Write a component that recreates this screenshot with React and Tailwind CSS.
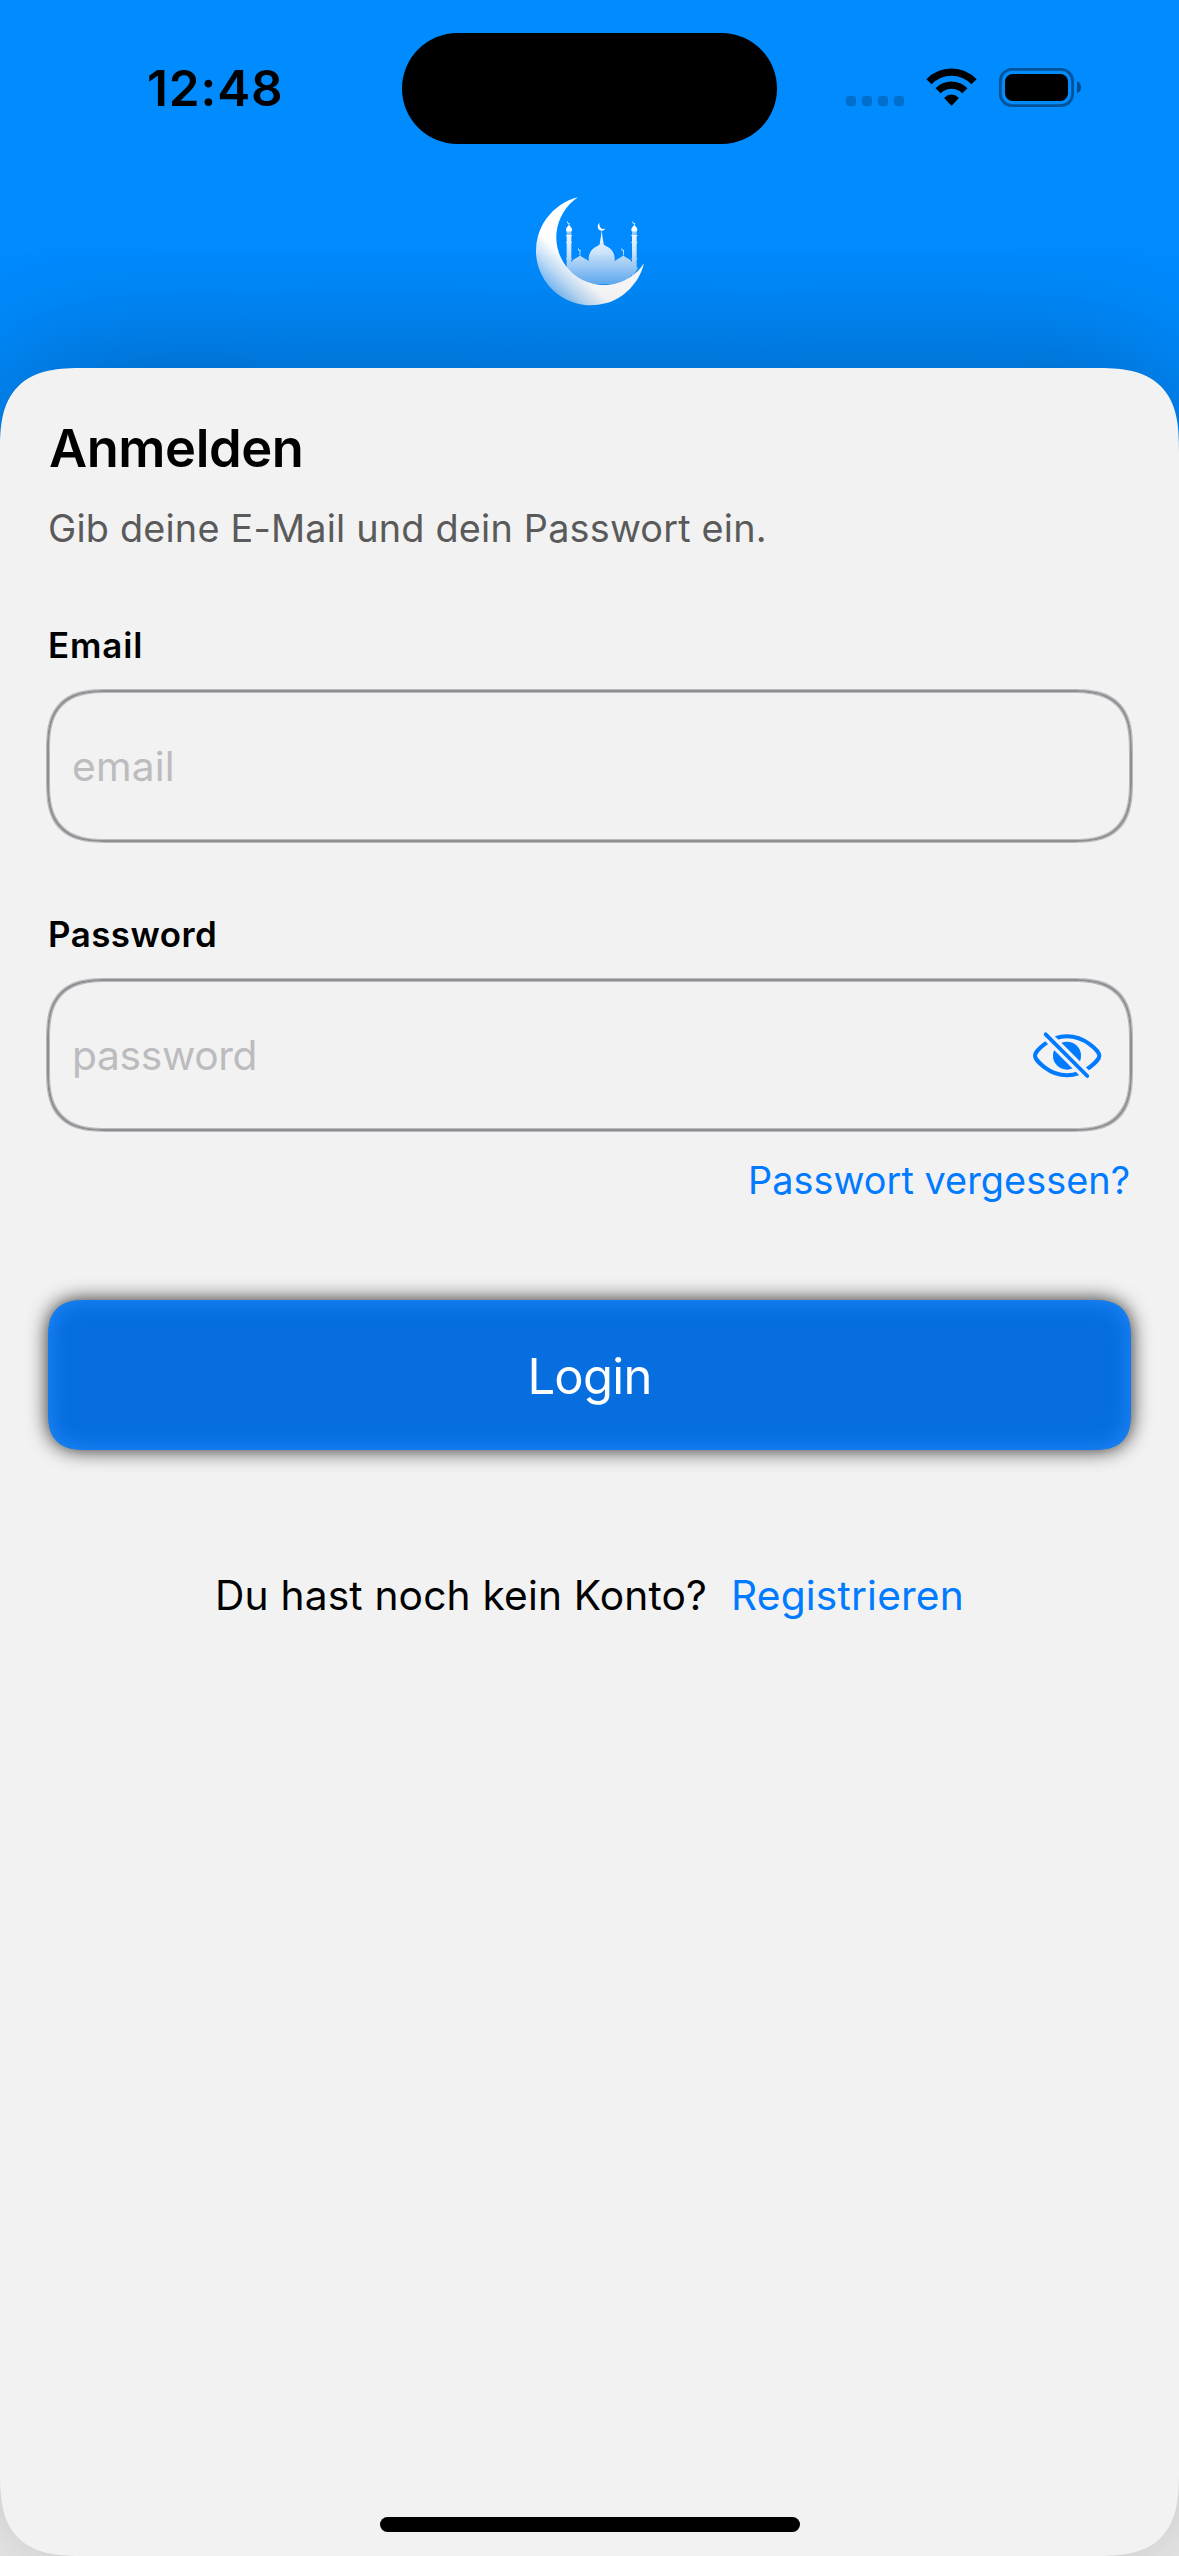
import React from "react";

function StatusIcons() {
  return (
    <svg className="ml-[69px] shrink-0" width="236" height="41" viewBox="846 68 236 41" fill="none">
      <g fill="#000" fillOpacity="0.2">
        <rect x="846" y="96" width="10" height="10" rx="3.2" />
        <rect x="862" y="96" width="10" height="10" rx="3.2" />
        <rect x="878" y="96" width="10" height="10" rx="3.2" />
        <rect x="894" y="96" width="10" height="10" rx="3.2" />
      </g>
      <g stroke="#000" strokeWidth="7.2">
        <path d="M929 81.8A31 31 0 0 1 974 81.8" />
        <path d="M938.1 90.8A18.8 18.8 0 0 1 964.9 90.8" />
      </g>
      <path
        d="M944.6 97.4A9.8 9.8 0 0 1 958.4 97.4Q959 98 958.4 98.6L952.1 105.3Q951.5 105.9 950.9 105.3L944.6 98.6Q944 98 944.6 97.4Z"
        fill="#000"
      />
      <rect x="1000.4" y="69.4" width="72.2" height="36.2" rx="11.6" stroke="#000" strokeOpacity="0.4" strokeWidth="2.8" />
      <rect x="1005" y="74" width="63" height="27" rx="7.8" fill="#000" />
      <path d="M1077 81.2C1079.6 82.2 1081 84.5 1081 87.3S1079.6 92.3 1077 93.3Z" fill="#000" fillOpacity="0.45" />
    </svg>
  );
}

function Finial({ x, y }) {
  return (
    <g transform={`translate(${x} ${y})`}>
      <path d="M-3 -7A5 5 0 1 0 4 -1A4.4 4.4 0 0 1 -3 -7Z" />
      <rect x="-1" y="1" width="2" height="14" />
    </g>
  );
}

function Minaret({ x }) {
  return (
    <g>
      <Finial x={x} y={128} />
      <path d={`M${x} 134L${x + 5} 139Q${x + 12} 146 ${x + 7} 154H${x - 7}Q${x - 12} 146 ${x - 5} 139Z`} />
      <rect x={x - 7} y="154" width="14" height="10" fillOpacity="0.6" />
      <rect x={x - 9} y="164" width="18" height="3" />
      <rect x={x - 7} y="167" width="14" height="140" />
      <rect x={x - 9} y="185" width="18" height="3" />
      <rect x={x - 9} y="234" width="18" height="3" />
    </g>
  );
}

function Logo() {
  return (
    <svg width="110" height="112" viewBox="75 44 330 336">
      <defs>
        <linearGradient id="moon" gradientUnits="userSpaceOnUse" x1="120" y1="332" x2="192" y2="260">
          <stop offset="0" stopColor="#6fb8fa" />
          <stop offset="0.5" stopColor="#c3e0fb" />
          <stop offset="1" stopColor="#fff" />
        </linearGradient>
        <linearGradient id="mosque" gradientUnits="userSpaceOnUse" x1="0" y1="140" x2="0" y2="312">
          <stop offset="0" stopColor="#fff" />
          <stop offset="0.45" stopColor="#cce5fd" />
          <stop offset="1" stopColor="#62aff8" />
        </linearGradient>
        <clipPath id="bowl">
          <path d="M100 100H384V264L340 330H100Z" />
        </clipPath>
      </defs>
      <g fill="url(#mosque)" clipPath="url(#bowl)">
        <Minaret x={177} />
        <Minaret x={373} />
        <path d="M184 246Q187 239 197 234Q207 230 210 225Q213 230 223 234Q232 238 236 243V232Q238 211 256 200Q270 195 275 181Q280 195 294 200Q312 211 314 232V243Q318 238 327 234Q337 230 340 225Q343 230 353 234Q363 239 366 246L384 264L340 312H220L170 260Z" />
        <Finial x={210} y={209} />
        <Finial x={340} y={209} />
        <path d="M275 148L277 166L281 190H269L273 166Z" />
        <path d="M269 127C262 132 261 143 268 149C275 154 284 151 286 144C281 148 275 146 272 142C268 137 267 132 269 127Z" fill="#fff" />
      </g>
      <path d="M204 51A164.3 164.3 0 1 0 402 249A143.1 143.1 0 1 1 204 51Z" fill="url(#moon)" />
    </svg>
  );
}

function EyeSlash() {
  return (
    <svg className="shrink-0" width="70" height="48" viewBox="156 215 210 144" fill="none">
      <mask id="slash" maskUnits="userSpaceOnUse" x="150" y="205" width="225" height="165">
        <rect x="150" y="205" width="225" height="165" fill="#fff" />
        <path d="M176 204L342 370" stroke="#000" strokeWidth="31" />
      </mask>
      <g mask="url(#slash)">
        <path
          d="M165 289C165 276 207 231 261 231S358 276 358 289S315 348 261 348S165 302 165 289Z"
          stroke="#007aff"
          strokeWidth="12"
        />
        <circle cx="261" cy="289" r="42" fill="#007aff" />
      </g>
      <path d="M197 225L322 350" stroke="#007aff" strokeWidth="11.5" strokeLinecap="round" />
    </svg>
  );
}

function Field({ children }) {
  return (
    <div className="mx-[47px] mt-[23px] flex h-[152px] items-center justify-between rounded-[62px] border-2 border-[#8e8e93] pr-7 pl-[23px] text-[40.7px] text-[#bcbcbe] shadow-[0_0_0_1px_rgba(142,142,147,0.55),inset_0_0_0_1px_rgba(142,142,147,0.55)] [corner-shape:superellipse(1.5)]">
      {children}
    </div>
  );
}

export default function App() {
  return (
    <div className="relative h-[2556px] w-[1179px] overflow-hidden bg-[#f2f2f2] font-['Inter',sans-serif] whitespace-nowrap text-black">
      <header className="h-[640px] bg-[#008bff] pt-[33px]">
        <div className="flex h-[111px] items-center pl-[147px]">
          <div className="mb-[2px] w-[255px] shrink-0 text-[49.5px] leading-[60px] font-semibold tracking-[0.87px]">12:48</div>
          <div className="h-[111px] w-[375px] shrink-0 rounded-full bg-black" />
          <StatusIcons />
        </div>
        <div className="mt-[51px] flex justify-center">
          <Logo />
        </div>
      </header>

      <main className="relative -mt-[272px] flex h-[2188px] flex-col rounded-[84px] bg-[#f2f2f2] pt-12 shadow-[0_0_150px_rgba(0,0,0,0.33)] [corner-shape:superellipse(1.5)]">
        <h1 className="ml-[49px] text-[52.4px] leading-[64px] font-semibold tracking-[-0.41px]">Anmelden</h1>
        <p className="mt-6 ml-12 text-[37.8px] leading-[48px] tracking-[0.2px] text-[#5a5a5a]">
          Gib deine E-Mail und dein Passwort ein.
        </p>

        <label className="mt-[71px] ml-12 text-[34.9px] leading-[44px] font-semibold tracking-[0.9px]">Email</label>
        <Field>
          <span className="pt-[2px] tracking-[0.2px]">email</span>
        </Field>

        <label className="mt-[70px] ml-12 text-[34.9px] leading-[44px] font-semibold tracking-[0.47px]">Password</label>
        <Field>
          <span className="pt-[2px] tracking-[-0.3px]">password</span>
          <EyeSlash />
        </Field>

        <a className="mt-[25px] mr-[49px] self-end text-[37.8px] leading-[48px] tracking-[0.05px] text-[#007aff]">
          Passwort vergessen?
        </a>

        <button className="mx-12 mt-24 flex h-[150px] items-center justify-center rounded-[40px] bg-[#066edf] pt-1 text-[49px] tracking-[-0.75px] text-white shadow-[0_0_20px_rgba(0,0,0,0.85),inset_0_0_22px_#228afd] [corner-shape:superellipse(1.5)]">
          Login
        </button>

        <div className="mt-[120px] flex justify-center gap-6 text-[40.7px] leading-[52px] tracking-[0.17px]">
          <span>Du hast noch kein Konto?</span>
          <a className="text-[#007aff]">Registrieren</a>
        </div>
      </main>

      <div className="absolute bottom-6 left-[380px] h-[15px] w-[420px] rounded-full bg-black" />
    </div>
  );
}
